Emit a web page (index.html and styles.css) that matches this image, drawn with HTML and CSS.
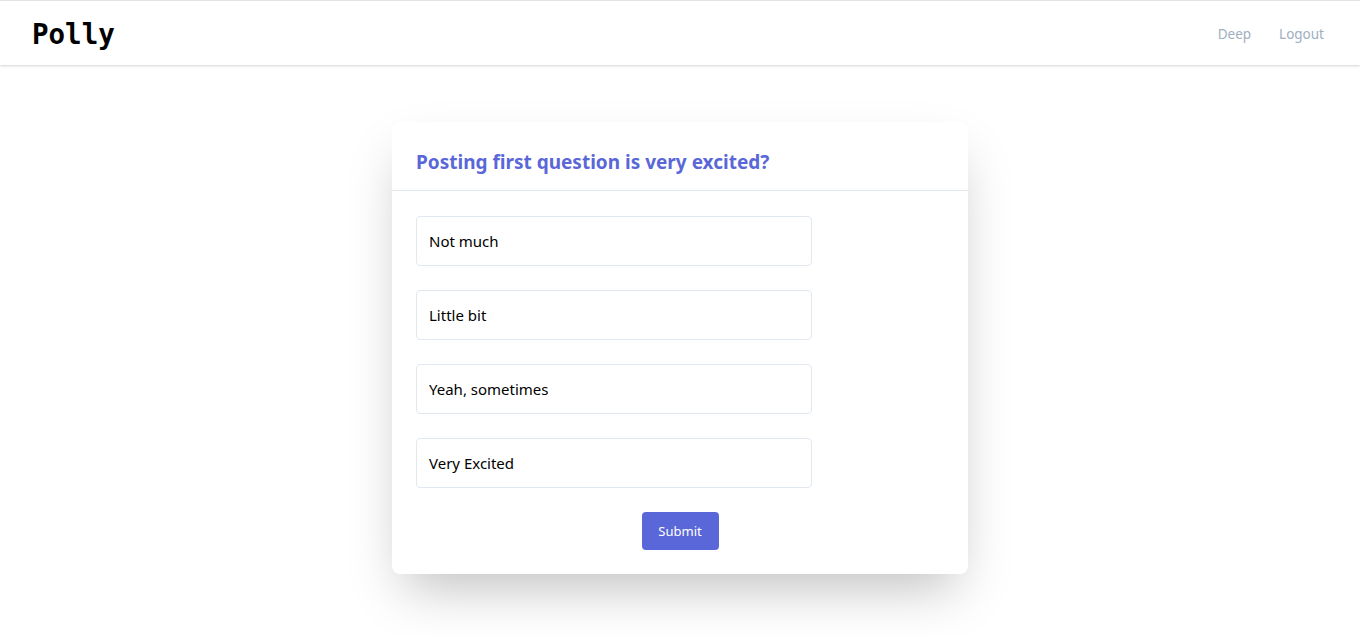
FILE: index.html
```html
<!DOCTYPE html>
<html>
<head>
<meta charset="utf-8">
<link rel="stylesheet" href="styles.css">
</head>
<body>
<header class="topbar">
  <div class="logo">Polly</div>
  <nav class="nav">
    <a class="nav-link">Deep</a>
    <a class="nav-link">Logout</a>
  </nav>
</header>
<main class="main">
  <section class="card">
    <div class="card-head">
      <h1 class="question">Posting first question is very excited?</h1>
    </div>
    <div class="card-body">
      <div class="option">Not much</div>
      <div class="option">Little bit</div>
      <div class="option">Yeah, sometimes</div>
      <div class="option">Very Excited</div>
      <div class="actions"><button class="submit">Submit</button></div>
    </div>
  </section>
</main>
</body>
</html>
```
FILE: styles.css
```css
* { box-sizing: border-box; }
html, body { margin: 0; padding: 0; background: #fff; }
body {
  font-family: "Noto Sans", "Open Sans", sans-serif;
  color: #000;
  border-top: 1px solid #e2e2e2;
}
.topbar {
  height: 64px;
  display: flex;
  align-items: center;
  justify-content: space-between;
  padding: 0 32px;
  box-shadow: 0 1px 3px rgba(0,0,0,0.12), 0 1px 2px rgba(0,0,0,0.06);
  position: relative;
}
.logo {
  font-family: "DejaVu Sans Mono", "Liberation Mono", monospace;
  font-weight: bold;
  font-size: 27.5px;
  padding-top: 2px;
}
.nav { display: flex; gap: 28px; padding: 2px 4px 0 0; }
.nav-link {
  color: #a0aec0;
  font-size: 13.5px;
  cursor: pointer;
}
.main {
  display: flex;
  justify-content: center;
  padding: 57px 0 80px;
}
.card {
  width: 576px;
  background: #fff;
  border-radius: 8px;
  box-shadow: 0 25px 50px -12px rgba(0,0,0,0.25);
}
.card-head {
  padding: 26px 24px 14px;
  border-bottom: 1px solid #e2e8f0;
}
.question {
  margin: 0;
  font-size: 19px;
  line-height: 28px;
  font-weight: bold;
  color: #5a67d8;
}
.card-body {
  padding: 25px 24px 24px;
  display: flex;
  flex-direction: column;
  gap: 24px;
}
.option {
  width: 396px;
  height: 50px;
  border: 1px solid #e2e8f0;
  border-radius: 4px;
  padding: 0 12px;
  display: flex;
  align-items: center;
  font-size: 15px;
}
.actions { display: flex; justify-content: center; }
.submit {
  font-family: inherit;
  background: #5a67d8;
  color: #fff;
  border: none;
  border-radius: 4px;
  font-size: 13px;
  width: 77px;
  height: 38px;
  padding: 0;
}
```
